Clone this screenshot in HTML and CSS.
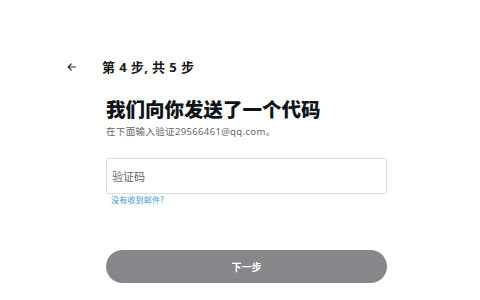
FILE: index.html
```html
<!DOCTYPE html>
<html lang="zh">
<head>
<meta charset="utf-8">
<link rel="stylesheet" href="styles.css">
</head>
<body>
<div class="page">
  <div class="header">
    <svg class="back" width="9" height="8" viewBox="0 0 9 8"><path d="M8.5 4H1.2M4.2 1L1.2 4L4.2 7" fill="none" stroke="#333" stroke-width="1.2" stroke-linecap="round" stroke-linejoin="round"/></svg>
    <span class="step">第 4 步, 共 5 步</span>
  </div>
  <div class="content">
    <h1 class="title">我们向你发送了一个代码</h1>
    <p class="sub">在下面输入验证29566461@qq.com。</p>
    <div class="field"><span class="placeholder">验证码</span></div>
    <a class="link">没有收到邮件?</a>
    <div class="btn">下一步</div>
  </div>
</div>
</body>
</html>
```
FILE: styles.css
```css
html, body {
  margin: 0;
  padding: 0;
  background: #fff;
}
body {
  width: 480px;
  height: 300px;
  overflow: hidden;
  font-family: "Noto Sans", "Noto Sans CJK SC", sans-serif;
  color: #111;
}
.page {
  display: flex;
  flex-direction: column;
}
.header {
  display: flex;
  align-items: center;
  padding: 58px 0 0 67px;
  height: 18px;
}
.back {
  display: block;
}
.step {
  margin-left: 26px;
  font-size: 13px;
  line-height: 18px;
  letter-spacing: 0.4px;
  font-weight: 700;
  color: #1a1a1a;
}
.content {
  display: flex;
  flex-direction: column;
  margin-left: 106px;
  width: 281px;
}
.title {
  margin: 20.5px 0 0;
  font-family: "Noto Sans CJK SC", sans-serif;
  font-size: 19.5px;
  line-height: 24px;
  font-weight: 900;
  color: #0f1419;
}
.sub {
  margin: 5px 0 0;
  font-size: 9.5px;
  line-height: 12px;
  letter-spacing: 0.35px;
  color: #666;
}
.field {
  margin-top: 20.5px;
  height: 34px;
  border: 1px solid #dcdcdc;
  border-radius: 3px;
  display: flex;
  align-items: center;
  padding-left: 5px;
}
.placeholder {
  font-size: 11px;
  color: #666;
}
.link {
  margin-top: 1px;
  padding-left: 5px;
  font-size: 8px;
  line-height: 10px;
  letter-spacing: 0.2px;
  color: #3a9ad6;
}
.btn {
  margin-top: 45px;
  height: 33px;
  border-radius: 17px;
  background: #86878a;
  color: #fff;
  font-size: 10px;
  font-weight: 700;
  display: flex;
  align-items: center;
  justify-content: center;
}
```
